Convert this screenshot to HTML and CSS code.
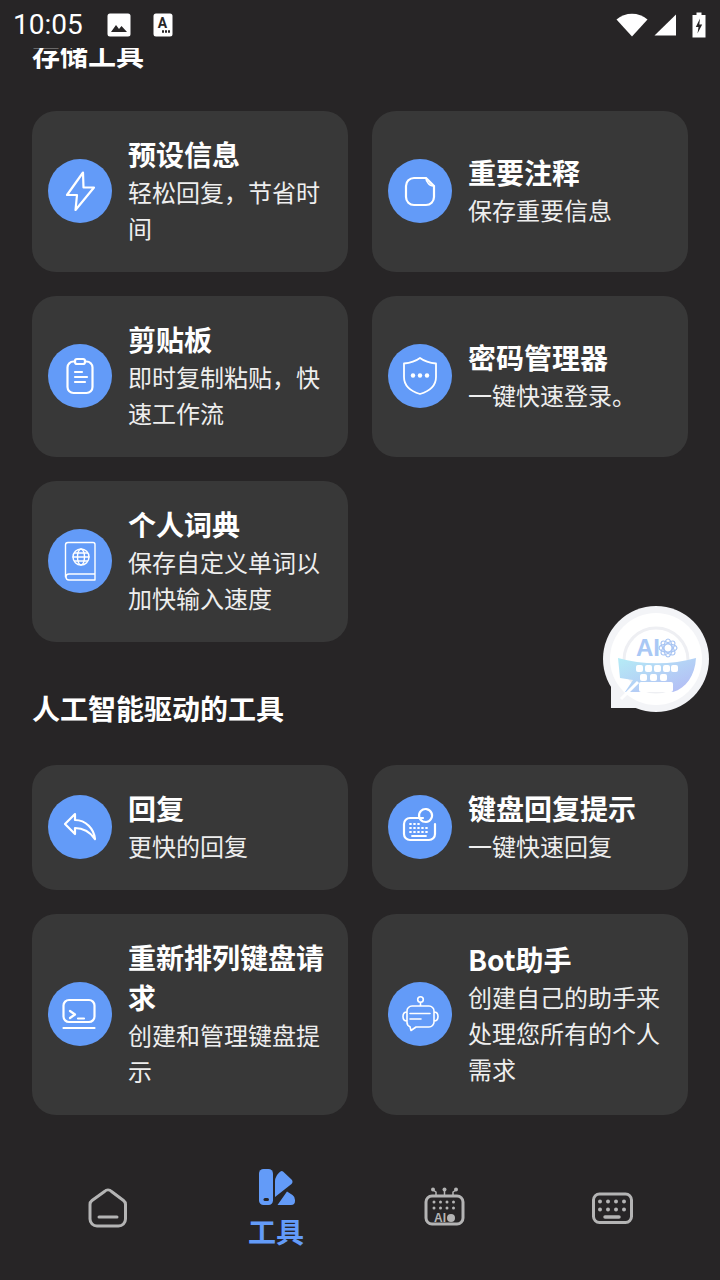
FILE: index.html
```html
<!DOCTYPE html>
<html lang="zh">
<head>
<meta charset="utf-8">
<title>工具</title>
<link rel="stylesheet" href="styles.css">
</head>
<body>
<div class="app">
  <header class="status">
    <span class="time">10:05</span>
    <svg class="st-pic" viewBox="0 0 24 24"><rect x="0.5" y="0.5" width="23" height="23" rx="2.5" fill="#fff"/><path d="M4 19l5-7 3 4 2.5-3 5.5 6z" fill="#272526"/></svg>
    <svg class="st-a" viewBox="0 0 20 24"><rect x="0.5" y="0.5" width="19" height="23" rx="2.5" fill="#fff"/><text x="9.5" y="14.5" class="st-a-text">A</text><path d="M9 18.5h2M12 18.5h2M15 18.5h2" stroke="#272526" stroke-width="2.4"/></svg>
    <span class="st-right">
      <svg class="st-wifi" viewBox="0 0 32 24"><path d="M0.5 6.5C9 -1.2 23 -1.2 31.500 6.500L16 23.500z" fill="#fff"/></svg>
      <svg class="st-sig" viewBox="0 0 22 22"><path d="M0.500 21.500L22 0.500V21.500z" fill="#fff"/></svg>
      <svg class="st-bat" viewBox="0 0 14 26"><path d="M4.500 0.500h5v2.500h4v22.500H.5V3h4z" fill="#fff"/><path d="M8 6.500L3.800 15h2.700l-1 6.500 4.700-9H7.300z" fill="#272526"/></svg>
    </span>
  </header>

  <main class="scroller">
    <div class="content">
      <h2 class="section-title first">存储工具</h2>
      <div class="grid">
        <article class="card">
          <span class="badge"><svg viewBox="0 0 64 64" class="ic"><path d="M35 13.500L19 36h10l-1.500 15L46 28.500H35.500z"/></svg></span>
          <div class="text"><h3>预设信息</h3><p>轻松回复，节省时间</p></div>
        </article>
        <article class="card">
          <span class="badge"><svg viewBox="0 0 64 64" class="ic"><path d="M26 19h12l8 8v11a8 8 0 0 1-8 8H26a8 8 0 0 1-8-8V27a8 8 0 0 1 8-8z"/><path d="M38 19a7 7 0 0 0 2 5 7 7 0 0 0 6 3" stroke-width="1.500"/></svg></span>
          <div class="text"><h3>重要注释</h3><p>保存重要信息</p></div>
        </article>
        <article class="card">
          <span class="badge"><svg viewBox="0 0 64 64" class="ic"><rect x="19.500" y="17.500" width="25" height="31.500" rx="6"/><rect x="27" y="15" width="10" height="5" rx="2" fill="#639bf8"/><path d="M27 28h7M27 33h12M27 38h10"/></svg></span>
          <div class="text"><h3>剪贴板</h3><p>即时复制粘贴，快速工作流</p></div>
        </article>
        <article class="card">
          <span class="badge"><svg viewBox="0 0 64 64" class="ic"><path d="M32 14c4 3 10 5 16 5.500V33c0 8-6 14-16 17-10-3-16-9-16-17V19.500C22 19 28 17 32 14z" stroke-width="1.800"/><circle cx="25" cy="31.500" r="2.200" class="fill"/><circle cx="32" cy="31.500" r="2.200" class="fill"/><circle cx="39" cy="31.500" r="2.200" class="fill"/></svg></span>
          <div class="text"><h3>密码管理器</h3><p>一键快速登录。</p></div>
        </article>
        <article class="card">
          <span class="badge"><svg viewBox="0 0 64 64" class="ic thin"><path d="M20 13.500h25a2 2 0 0 1 2 2V45H21a3 3 0 0 0 0 6h26M17.500 48V16a2.500 2.500 0 0 1 2.500-2.500M47 45v6"/><circle cx="33" cy="28" r="8"/><ellipse cx="33" cy="28" rx="3.500" ry="8"/><path d="M25 28h16M26.500 24h13M26.500 32h13"/></svg></span>
          <div class="text"><h3>个人词典</h3><p>保存自定义单词以加快输入速度</p></div>
        </article>
      </div>

      <h2 class="section-title">人工智能驱动的工具</h2>
      <div class="grid">
        <article class="card">
          <span class="badge"><svg viewBox="0 0 64 64" class="ic"><path d="M27 19L17 29l10 10v-6c9 0 15 4 20 11-1-10-9-19-20-19z"/></svg></span>
          <div class="text"><h3>回复</h3><p>更快的回复</p></div>
        </article>
        <article class="card">
          <span class="badge"><svg viewBox="0 0 64 64" class="ic"><path d="M35 23H22a6 6 0 0 0-6 6v10a6 6 0 0 0 6 6h19a6 6 0 0 0 6-6V29"/><path d="M35 24v3h4" stroke-width="0"/><path d="M35 26.500a6.500 6.500 0 1 1 3 0.500z"/><path d="M22 29h1M26 29h1M30 29h1M22 33h1M26 33h1M30 33h1M34 33h1M38 33h1M22 37h1M26 37h1M30 37h1M34 37h1M38 37h1M24 41h14" stroke-width="1.800"/></svg></span>
          <div class="text"><h3>键盘回复提示</h3><p>一键快速回复</p></div>
        </article>
        <article class="card">
          <span class="badge"><svg viewBox="0 0 64 64" class="ic"><rect x="15.500" y="18" width="31" height="22" rx="5.500"/><path d="M22 29l5 3.500-5 3.500M30 36.500h6M15.500 46h31"/></svg></span>
          <div class="text"><h3>重新排列键盘请求</h3><p>创建和管理键盘提示</p></div>
        </article>
        <article class="card">
          <span class="badge"><svg viewBox="0 0 64 64" class="ic bot"><circle cx="32.500" cy="17.500" r="2.800"/><path d="M32.500 20.500V24M24 24h17a5 5 0 0 1 5 5v11a5 5 0 0 1-5 5H28l-5 3.500-1-3.700a5 5 0 0 1-3-4.800V29a5 5 0 0 1 5-5zM19 30c-3 0-4 2-4 4.500s1 4.500 4 4.500M46 30c3 0 4 2 4 4.500s-1 4.500-4 4.500M22 31.500h20M22 37h11"/></svg></span>
          <div class="text"><h3>Bot助手</h3><p>创建自己的助手来处理您所有的个人需求</p></div>
        </article>
      </div>
    </div>
  </main>

  <nav class="nav">
    <div class="nav-item">
      <svg class="nav-ic" viewBox="0 0 44 44"><path d="M18.500 5.500a5 5 0 0 1 7 0l12 9a5 5 0 0 1 2 4V33a7 7 0 0 1-7 7H11a7 7 0 0 1-7-7V18.500a5 5 0 0 1 2-4z"/><path d="M13 31h18"/></svg>
    </div>
    <div class="nav-item active">
      <svg class="nav-ic-tools" viewBox="0 0 44 44"><rect x="5" y="2" width="14" height="36" rx="4.500" fill="#639bf8"/><rect x="9.500" y="31" width="5.500" height="3" rx="1.500" fill="#272526"/><path d="M21 30V14.500C21 10 24 6.500 26.500 4.500a2 2 0 0 1 2.500 0l8.500 8a3 3 0 0 1 0 4.500z" fill="#639bf8"/><path d="M23.500 38L33 24.500l5.500 3.500a6 6 0 0 1 2.500 5v1a4 4 0 0 1-4 4z" fill="#639bf8"/></svg>
      <span class="nav-label">工具</span>
    </div>
    <div class="nav-item">
      <svg class="nav-ic" viewBox="0 0 44 44"><rect x="4" y="10" width="37" height="28" rx="6"/><path class="th" d="M14 9V6l-3-2M22.500 9V4M31 9V6l3-2"/><circle class="dot" cx="11" cy="3.500" r="2"/><circle class="dot" cx="22.500" cy="3.500" r="2"/><circle class="dot" cx="34" cy="3.500" r="2"/><g class="dot"><circle cx="12" cy="16" r="1.500"/><circle cx="18.500" cy="16" r="1.500"/><circle cx="25" cy="16" r="1.500"/><circle cx="31.500" cy="16" r="1.500"/><circle cx="12" cy="22" r="1.500"/><circle cx="18.500" cy="22" r="1.500"/><circle cx="25" cy="22" r="1.500"/><circle cx="31.500" cy="22" r="1.500"/><circle cx="29" cy="32" r="4"/></g><text x="12" y="36" class="ai-small">AI</text></svg>
    </div>
    <div class="nav-item">
      <svg class="nav-ic" viewBox="0 0 44 44"><rect x="3.500" y="8" width="38" height="28.500" rx="6"/><g class="dot"><circle cx="10" cy="15.500" r="2"/><circle cx="18" cy="15.500" r="2"/><circle cx="26" cy="15.500" r="2"/><circle cx="34" cy="15.500" r="2"/><circle cx="10" cy="23.500" r="2"/><circle cx="18" cy="23.500" r="2"/><circle cx="26" cy="23.500" r="2"/><circle cx="34" cy="23.500" r="2"/></g><path d="M15 31h14" stroke-width="3.500"/></svg>
    </div>
  </nav>

  <div class="fab">
    <svg viewBox="0 0 112 116" width="112" height="116">
      <defs>
        <linearGradient id="bowl" x1="0" y1="0" x2="1" y2="1"><stop offset="0" stop-color="#b5ecf6"/><stop offset="1" stop-color="#b3b8f5"/></linearGradient>
      </defs>
      <circle cx="56" cy="59" r="53" fill="#f3f4f7"/>
      <path d="M11 80V108H40z" fill="#f3f4f7"/>
      <circle cx="56" cy="59" r="46" fill="#fff"/>
      <circle cx="56" cy="60" r="32" fill="none" stroke="#eeeff3" stroke-width="3"/>
      <path d="M18 58c24 7 54 7 78 0-1 18-10 30-23 34H25l8-12-13-2z" fill="url(#bowl)"/>
      <path d="M21 99l17-17" stroke="#fff" stroke-width="3"/>
      <text x="36" y="56" class="fab-ai">AI</text>
      <g fill="none" stroke="#a9c5f3" stroke-width="1.200">
        <ellipse cx="68" cy="48" rx="9" ry="4"/>
        <ellipse cx="68" cy="48" rx="9" ry="4" transform="rotate(45 68 48)"/>
        <ellipse cx="68" cy="48" rx="9" ry="4" transform="rotate(90 68 48)"/>
        <ellipse cx="68" cy="48" rx="9" ry="4" transform="rotate(135 68 48)"/>
      </g>
      <g fill="#fff">
        <rect x="36" y="65" width="7" height="7" rx="2"/><rect x="45" y="65" width="7" height="7" rx="2"/><rect x="54" y="65" width="7" height="7" rx="2"/><rect x="63" y="65" width="7" height="7" rx="2"/><rect x="71" y="65" width="7" height="7" rx="2"/>
        <rect x="40" y="74" width="7" height="7" rx="2"/><rect x="50" y="74" width="7" height="7" rx="2"/><rect x="60" y="74" width="7" height="7" rx="2"/>
        <rect x="39" y="82" width="34" height="10" rx="2"/>
      </g>
    </svg>
  </div>
</div>
</body>
</html>
```

FILE: styles.css
```css
* { box-sizing: border-box; }
html, body { margin: 0; padding: 0; }
body { background: #272526; font-family: "Noto Sans CJK SC", "Noto Sans", sans-serif; color: #fff; }
.app { position: relative; width: 720px; height: 1280px; display: flex; flex-direction: column; overflow: hidden; background: #272526; }

.status { height: 48px; flex: none; display: flex; align-items: center; padding: 2px 0 0 13px; font-family: Roboto, sans-serif; }
.time { font-size: 28px; line-height: 48px; width: 69px; white-space: nowrap; color: #fff; }
.st-pic { width: 24px; height: 24px; margin-left: 25px; }
.st-a { width: 20px; height: 24px; margin-left: 22px; }
.st-a-text { font: 700 14px Roboto, sans-serif; text-anchor: middle; fill: #272526; }
.st-right { margin-left: auto; display: flex; align-items: center; padding-right: 14px; }
.st-wifi { width: 32px; height: 24px; }
.st-sig { width: 22px; height: 22px; margin-left: 6px; }
.st-bat { width: 14px; height: 26px; margin-left: 16px; }

.scroller { flex: 1; min-height: 0; overflow: hidden; }
.content { margin-top: -13px; }
.section-title { margin: 47px 0 38px 32px; font-size: 28px; line-height: 38px; font-weight: 700; }
.section-title.first { margin-top: 0; }

.grid { display: grid; grid-template-columns: 316px 316px; gap: 24px; padding: 0 32px; align-items: stretch; }
.card { background: #383838; border-radius: 24px; padding: 22.5px 16px; display: flex; align-items: center; gap: 16px; }
.badge { flex: none; width: 64px; height: 64px; border-radius: 50%; background: #639bf8; display: block; margin-bottom: 1px; }
.ic { display: block; width: 64px; height: 64px; fill: none; stroke: #fff; stroke-width: 2.200; stroke-linecap: round; stroke-linejoin: round; }
.ic.thin { stroke-width: 1.400; }
.ic.bot { stroke-width: 1.600; }
.ic .fill { fill: #fff; stroke: none; }
.text { min-width: 0; flex: 1; padding-bottom: 4px; }
.text h3 { margin: 0; font-size: 28px; line-height: 40px; font-weight: 700; }
.text p { margin: 0; font-size: 24px; line-height: 36px; color: #eeeeee; }

.nav { flex: none; height: 144px; display: flex; padding: 0 24px; }
.nav-item { flex: 1; display: flex; flex-direction: column; align-items: center; justify-content: center; }
.nav-ic { display: block; width: 44px; height: 44px; fill: none; stroke: #b4b4b4; stroke-width: 3; stroke-linecap: round; stroke-linejoin: round; }
.nav-ic .dot { fill: #b4b4b4; stroke: none; }
.nav-ic .th { stroke-width: 1.500; }
.ai-small { font: 700 12px "Liberation Sans", sans-serif; fill: #b4b4b4; stroke: none; }
.nav-ic-tools { display: block; width: 44px; height: 44px; }
.nav-label { margin-top: 2px; font-size: 28px; line-height: 36px; color: #639bf8; font-weight: 700; }

.fab { position: absolute; left: 600px; top: 600px; width: 112px; height: 116px; }
.fab-ai { font: 700 24px "Liberation Sans", sans-serif; fill: #a9c8f5; }
```
